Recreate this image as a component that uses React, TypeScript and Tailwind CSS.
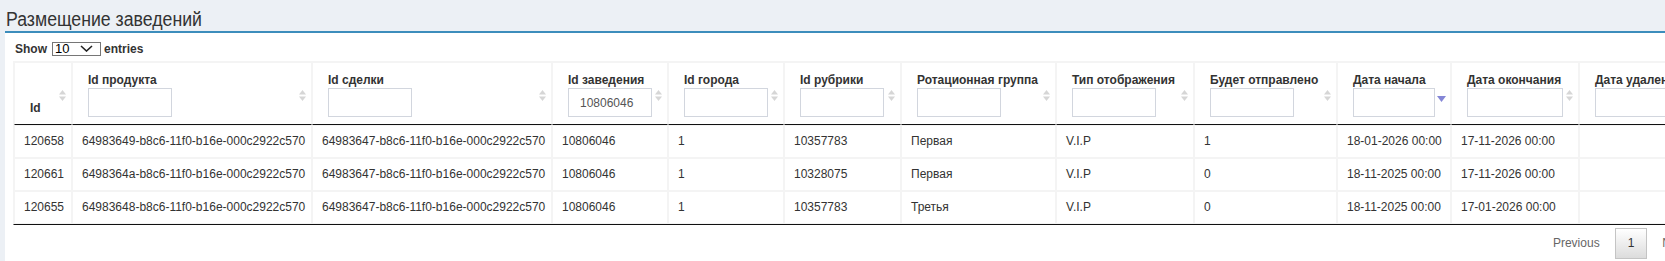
import React from "react";

type Col = { label: string; w: number; input: number | null; sort: "both" | "desc" | "none"; value?: string };

const cols: Col[] = [
  { label: "Id", w: 58, input: null, sort: "both" },
  { label: "Id продукта", w: 240, input: 84, sort: "both" },
  { label: "Id сделки", w: 240, input: 84, sort: "both" },
  { label: "Id заведения", w: 116, input: 84, sort: "both", value: "10806046" },
  { label: "Id города", w: 116, input: 84, sort: "both" },
  { label: "Id рубрики", w: 117, input: 84, sort: "both" },
  { label: "Ротационная группа", w: 155, input: 84, sort: "both" },
  { label: "Тип отображения", w: 138, input: 84, sort: "both" },
  { label: "Будет отправлено", w: 143, input: 84, sort: "both" },
  { label: "Дата начала", w: 114, input: 82, sort: "desc" },
  { label: "Дата окончания", w: 128, input: 96, sort: "both" },
  { label: "Дата удаления", w: 122, input: 96, sort: "both" },
];

const rows: string[][] = [
  ["120658", "64983649-b8c6-11f0-b16e-000c2922c570", "64983647-b8c6-11f0-b16e-000c2922c570", "10806046", "1", "10357783", "Первая", "V.I.P", "1", "18-01-2026 00:00", "17-11-2026 00:00", ""],
  ["120661", "6498364a-b8c6-11f0-b16e-000c2922c570", "64983647-b8c6-11f0-b16e-000c2922c570", "10806046", "1", "10328075", "Первая", "V.I.P", "0", "18-11-2025 00:00", "17-11-2026 00:00", ""],
  ["120655", "64983648-b8c6-11f0-b16e-000c2922c570", "64983647-b8c6-11f0-b16e-000c2922c570", "10806046", "1", "10357783", "Третья", "V.I.P", "0", "18-11-2025 00:00", "17-01-2026 00:00", ""],
];

function SortBoth() {
  return (
    <svg width="7" height="11" viewBox="0 0 7 11" className="absolute right-[5px] top-[27px]">
      <path d="M3.5 0 L7 4.5 H0 Z" fill="#d6d6d6" />
      <path d="M0 6.5 H7 L3.5 11 Z" fill="#d6d6d6" />
    </svg>
  );
}

function SortDesc() {
  return (
    <svg width="9" height="6" viewBox="0 0 9 6" className="absolute right-[4px] top-[33px]">
      <path d="M0 0 H9 L4.5 6 Z" fill="#8486d6" />
    </svg>
  );
}

export default function App() {
  const tableWidth = cols.reduce((s, c) => s + c.w, 0) + 2;
  return (
    <div className="w-[1665px] h-[261px] overflow-hidden bg-[#ecf0f5] text-[#333] font-['Liberation_Sans',Arial,sans-serif]">
      <div className="pl-[5px] w-[1710px]">
        <div className="h-[31px] pl-[1px] pt-[8px] text-[20px] leading-[23px] text-[#333]">
          <span className="inline-block origin-left scale-x-[0.885] whitespace-nowrap">Размещение заведений</span>
        </div>
        <div className="bg-white border-t-2 border-[#3c8dbc] px-[8px] pt-[6px] h-[230px]">
          <div className="flex items-center h-[19px] mb-[3px] text-[12px] font-bold pl-[2px]">
            <span>Show</span>
            <div className="ml-[5px] mr-[3px] w-[49px] h-[14px] border border-[#767676] flex items-center justify-between pl-[2px] pr-[7px] font-normal text-[13px] leading-[12px] text-black">
              <span>10</span>
              <svg width="13" height="7" viewBox="0 0 13 7">
                <path d="M1 1 L6.5 6 L12 1" fill="none" stroke="#222" strokeWidth="1.6" />
              </svg>
            </div>
            <span>entries</span>
          </div>
          <table
            className="table-fixed border-separate border-spacing-0 border border-[#f4f4f4] border-b-[#111] text-[12px]"
            style={{ width: tableWidth }}
          >
            <colgroup>
              {cols.map((c, i) => (
                <col key={i} style={{ width: c.w }} />
              ))}
            </colgroup>
            <thead>
              <tr>
                {cols.map((c, i) => (
                  <th
                    key={i}
                    className={`relative align-bottom text-left font-bold border border-[#f4f4f4] border-b-[#111] pl-[15px] pt-[9px] ${c.input ? "pb-[7px]" : "pb-[8px]"} whitespace-nowrap overflow-visible`}
                  >
                    <div className="leading-[16px] text-[#333]">{c.label}</div>
                    {c.input !== null && (
                      <input
                        readOnly
                        defaultValue={c.value ?? ""}
                        className="block h-[29px] border border-[#d2d6de] bg-white pl-[11px] text-[12px] font-normal text-[#555] outline-none"
                        style={{ width: c.input }}
                      />
                    )}
                    {c.sort === "both" && <SortBoth />}
                    {c.sort === "desc" && <SortDesc />}
                  </th>
                ))}
              </tr>
            </thead>
            <tbody>
              {rows.map((r, ri) => (
                <tr key={ri}>
                  {r.map((v, ci) => (
                    <td
                      key={ci}
                      className="border border-[#f4f4f4] pl-[9px] py-[7px] leading-[17px] text-[#333] whitespace-nowrap overflow-hidden"
                    >
                      {v || "\u00a0"}
                    </td>
                  ))}
                </tr>
              ))}
            </tbody>
          </table>
          <div className="flex justify-end mt-[3px] text-[12px] leading-[17px]" style={{ width: tableWidth }}>
            <span className="px-[12px] py-[6px] border border-transparent text-[#666]">Previous</span>
            <span className="ml-[2px] px-[12px] py-[6px] border border-[#c4c4c4] bg-gradient-to-b from-white to-[#dcdcdc] text-[#333]">1</span>
            <span className="ml-[2px] px-[12px] py-[6px] border border-transparent text-[#666] mr-[2px]">Next</span>
          </div>
        </div>
      </div>
    </div>
  );
}
